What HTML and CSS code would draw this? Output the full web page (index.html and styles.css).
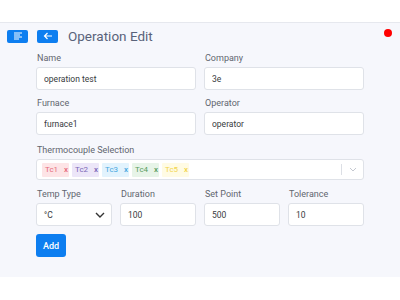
FILE: index.html
```html
<!DOCTYPE html>
<html lang="en">
<head>
    <meta charset="UTF-8">
    <meta name="viewport" content="width=device-width, initial-scale=1.0">
    <title>Operation Edit</title>
    <link rel="stylesheet" href="styles.css">
</head>
<body>
    <div class="topbar"></div>
    <div class="page">
        <div class="page-header">
            <button class="icon-btn">
                <svg width="10" height="8" viewBox="0 0 10 8"><path d="M1 1h8M1 3h6M1 5h8M1 7h5" stroke="#fff" stroke-width="1"/></svg>
            </button>
            <button class="icon-btn">
                <svg width="10" height="8" viewBox="0 0 10 8"><path d="M9 4H1.5M4.5 1L1.5 4l3 3" stroke="#fff" stroke-width="1.2" fill="none"/></svg>
            </button>
            <h1 class="page-title">Operation Edit</h1>
            <span class="status-dot"></span>
        </div>

        <form class="form">
            <div class="row row-2">
                <div class="field">
                    <label>Name</label>
                    <input type="text" value="operation test">
                </div>
                <div class="field">
                    <label>Company</label>
                    <input type="text" value="3e">
                </div>
            </div>
            <div class="row row-2">
                <div class="field">
                    <label>Furnace</label>
                    <input type="text" value="furnace1">
                </div>
                <div class="field">
                    <label>Operator</label>
                    <input type="text" value="operator">
                </div>
            </div>
            <div class="field field-tc">
                <label>Thermocouple Selection</label>
                <div class="multi-select">
                    <div class="tags">
                        <span class="tag tag-red">Tc1 <b>x</b></span>
                        <span class="tag tag-purple">Tc2 <b>x</b></span>
                        <span class="tag tag-blue">Tc3 <b>x</b></span>
                        <span class="tag tag-green">Tc4 <b>x</b></span>
                        <span class="tag tag-yellow">Tc5 <b>x</b></span>
                    </div>
                    <span class="sep"></span>
                    <svg class="caret" width="8" height="5" viewBox="0 0 8 5"><path d="M1 1l3 3 3-3" stroke="#c4c8d0" stroke-width="1" fill="none"/></svg>
                </div>
            </div>
            <div class="row row-4">
                <div class="field">
                    <label>Temp Type</label>
                    <div class="select-box">
                        <span>°C</span>
                        <svg width="10" height="6" viewBox="0 0 10 6"><path d="M1 1l4 4 4-4" stroke="#333" stroke-width="1.4" fill="none"/></svg>
                    </div>
                </div>
                <div class="field">
                    <label>Duration</label>
                    <input type="text" value="100">
                </div>
                <div class="field">
                    <label>Set Point</label>
                    <input type="text" value="500">
                </div>
                <div class="field">
                    <label>Tolerance</label>
                    <input type="text" value="10">
                </div>
            </div>
            <div>
                <button type="button" class="btn-add">Add</button>
            </div>
        </form>
    </div>
</body>
</html>
```

FILE: styles.css
```css
* {
    box-sizing: border-box;
}

body {
    margin: 0;
    font-family: Roboto, "Liberation Sans", sans-serif;
    background: #fff;
    color: #333;
}

/* Top white strip */
.topbar {
    height: 23px;
    border-bottom: 1px solid #e6e8ee;
    background: #fff;
}

.page {
    background: #f6f7fc;
    height: 254px;
    padding: 6px 0 0 0;
}

/* Header */
.page-header {
    position: relative;
    display: flex;
    align-items: center;
    gap: 9px;
    padding-left: 7px;
    height: 14px;
}

.icon-btn {
    width: 21px;
    height: 13px;
    border: none;
    border-radius: 2px;
    background: #0d7ef0;
    display: flex;
    align-items: center;
    justify-content: center;
    padding: 0;
}

.page-title {
    margin: 0 0 0 1px;
    font-size: 13.5px;
    font-weight: 400;
    color: #59627a;
}

.status-dot {
    position: absolute;
    right: 8px;
    top: 0;
    width: 8px;
    height: 8px;
    border-radius: 50%;
    background: #f00;
}

/* Form */
.form {
    width: 328px;
    margin: 9px 0 0 36px;
    display: flex;
    flex-direction: column;
    gap: 7px;
}

.row {
    display: grid;
    gap: 8px;
}

.row-2 {
    grid-template-columns: minmax(0, 1fr) minmax(0, 1fr);
}

.row-4 {
    grid-template-columns: repeat(4, minmax(0, 1fr));
    margin-top: 1px;
}

.field {
    display: flex;
    flex-direction: column;
    min-width: 0;
}

.field-tc {
    margin-top: 2px;
}

.field label {
    font-size: 9px;
    color: #62666f;
    height: 12px;
    line-height: 12px;
    margin-bottom: 3px;
    padding-left: 1px;
    white-space: nowrap;
}

.field input,
.select-box {
    width: 100%;
    min-width: 0;
    height: 23px;
    border: 1px solid #dfe2e8;
    border-radius: 3px;
    background: #fff;
    font-family: inherit;
    font-size: 8.5px;
    color: #383b40;
    padding: 0 7px;
    outline: none;
}

.select-box {
    display: flex;
    align-items: center;
    justify-content: space-between;
    padding-right: 6px;
}

/* Thermocouple multi select */
.multi-select {
    height: 21px;
    border: 1px solid #dfe2e8;
    border-radius: 3px;
    background: #fff;
    display: flex;
    align-items: center;
    padding: 0 6px 0 5px;
}

.tags {
    flex: 1;
    display: flex;
    gap: 3px;
}

.tag {
    flex-shrink: 0;
    width: 27px;
    height: 14px;
    font-size: 8px;
    line-height: 14px;
    padding-left: 3px;
    border-radius: 1px;
    white-space: nowrap;
}

.tag b {
    font-weight: 500;
    margin-left: 4px;
}

.tag-red { background: #fde4e6; color: #e66b7a; }
.tag-purple { background: #ece6f8; color: #7b68b7; }
.tag-blue { background: #e2f3fd; color: #49a8df; }
.tag-green { background: #e7f4e8; color: #5a9e5e; }
.tag-yellow { background: #fffbe4; color: #f2d54c; }

.sep {
    width: 1px;
    height: 11px;
    background: #dcdfe5;
    margin-right: 7px;
}

/* Add button */
.btn-add {
    width: 30px;
    height: 23px;
    border: none;
    border-radius: 3px;
    background: #0d7ef0;
    color: #fff;
    font-family: inherit;
    font-size: 9px;
    font-weight: 500;
    padding: 0;
    margin-top: 1px;
}
```
